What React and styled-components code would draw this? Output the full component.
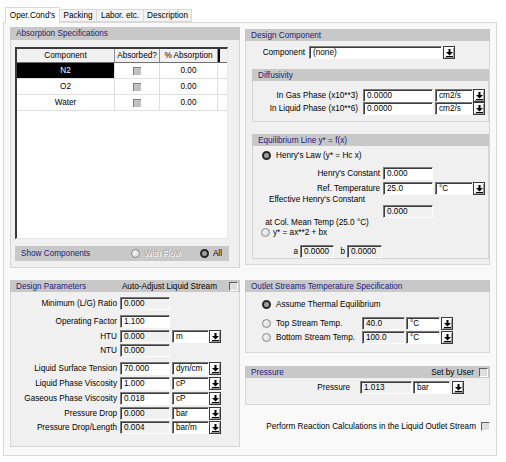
import React from 'react'
import styled, { createGlobalStyle } from 'styled-components'

const GlobalStyle = createGlobalStyle`
	body {
		margin: 0;
		background: #fff;
		font-family: "Liberation Sans", Arial, sans-serif;
		font-size: 8.2px;
		color: #000;
	}
`

const Frame = styled.div`
	width: 506px;
	height: 462px;
	padding: 7px 0 0 3px;
	box-sizing: border-box;
`

const TabBar = styled.div`
	display: flex;
	align-items: flex-end;
	height: 15px;
	padding-left: 3px;
	position: relative;
	z-index: 1;
`

const Tab = styled.div`
	width: ${p => p.$w}px;
	height: ${p => (p.$active ? 16 : 13)}px;
	box-sizing: border-box;
	display: flex;
	align-items: center;
	justify-content: center;
	margin-left: -1px;
	border: 1px solid #d9d9d9;
	border-bottom: ${p => (p.$active ? '0' : '1px solid #d9d9d9')};
	background: ${p => (p.$active ? '#fff' : '#f3f3f3')};
	margin-bottom: ${p => (p.$active ? '-1px' : '0')};
`

const Page = styled.div`
	width: 494px;
	height: 434px;
	box-sizing: border-box;
	border: 1px solid #d9d9d9;
	background: #f9f9f9;
	padding: 4px 0 0 6px;
	display: grid;
	grid-template-columns: 230px 245px;
	column-gap: 5px;
	align-items: start;
`

const Column = styled.div`
	display: flex;
	flex-direction: column;
	padding-top: ${p => p.$pt || 0}px;
`

const Group = styled.div`
	height: ${p => p.$h}px;
	box-sizing: border-box;
	background: #f0f0f0;
	border: 1px solid #d6d6d6;
	border-top: 0;
	margin-top: ${p => p.$mt || 0}px;
	margin-left: ${p => p.$ml || 0}px;
	display: flex;
	flex-direction: column;
`

const GroupHeader = styled.div`
	height: ${p => p.$h || 12}px;
	flex: none;
	margin: 0 -1px;
	background: #c8c8c8;
	color: #22227a;
	display: flex;
	align-items: center;
	justify-content: space-between;
	padding: 0 6px;
	white-space: nowrap;
`

const HeaderExtra = styled.span`
	color: #000;
	display: flex;
	align-items: center;
	gap: ${p => p.$gap || 8}px;
	margin-right: -4px;
`

const AbsBody = styled.div`
	padding: 7px 0 0 4px;
`

const GridBox = styled.div`
	width: 213px;
	height: 192px;
	box-sizing: border-box;
	background: #fff;
	border-style: solid;
	border-width: 2px 1px 1px 2px;
	border-color: #3a3a3a #e8e8e8 #e8e8e8 #3a3a3a;
`

const GridRow = styled.div`
	display: grid;
	grid-template-columns: 98px 45px 58px 2px 1fr;
	height: ${p => (p.$head ? 14 : 16)}px;
	background: ${p => (p.$head ? '#f0f0f0' : '#fff')};
	border-bottom: 1px solid ${p => (p.$head ? '#707070' : '#e0e0e0')};
	box-sizing: border-box;
`

const Cell = styled.div`
	display: flex;
	align-items: center;
	justify-content: center;
	background: ${p => (p.$sel ? '#000' : 'transparent')};
	color: ${p => (p.$sel ? '#fff' : '#000')};
	border-right: 1px solid ${p => (p.$head ? '#909090' : '#e0e0e0')};
	white-space: nowrap;
`

const HeadBar = styled.div`
	background: ${p => (p.$show ? '#000' : 'transparent')};
`

const Filler = styled.div`
	background: ${p => (p.$head ? '#f0f0f0' : '#fff')};
`

const GridCheck = styled.span`
	width: 7px;
	height: 7px;
	background: #c0c0c0;
	border-top: 1px solid #808080;
	border-left: 1px solid #808080;
`

const ShowBar = styled.div`
	margin-top: 7px;
	width: 214px;
	height: 15px;
	box-sizing: border-box;
	background: #c8c8c8;
	color: #22227a;
	display: flex;
	align-items: center;
	padding-left: 6px;
`

const ShowOptions = styled.div`
	display: flex;
	align-items: center;
	margin-left: auto;
	gap: 20px;
	padding-right: 7px;
	color: #000;
`

const RadioLabel = styled.label`
	display: flex;
	align-items: center;
	gap: ${p => p.$gap || 4}px;
	padding-left: ${p => p.$pl || 0}px;
	color: ${p => (p.$disabled ? '#a8a8a8' : '#000')};
	text-shadow: ${p => (p.$disabled ? '1px 1px 0 #fff' : 'none')};
	white-space: nowrap;
`

const Radio = styled.span`
	width: 9px;
	height: 9px;
	flex: none;
	box-sizing: border-box;
	border-radius: 50%;
	${p =>
		p.$on
			? 'border: 2.5px solid #262626; background: #a0a0a0;'
			: 'border: 1px solid #8a8a8a; background: radial-gradient(circle at 40% 40%, #f4f4f4, #d2d2d2);'}
`

const Check = styled.span`
	width: 9px;
	height: 9px;
	flex: none;
	box-sizing: border-box;
	background: #dedede;
	border-style: solid;
	border-width: 1px;
	border-color: #606060 #fff #fff #606060;
`

const Body = styled.div`
	display: flex;
	flex-direction: column;
`

const Row = styled.div`
	display: grid;
	grid-template-columns: ${p => p.$cols};
	align-items: center;
	height: ${p => p.$h || 13}px;
	margin-top: ${p => p.$mt || 0}px;
	white-space: nowrap;
`

const Label = styled.span`
	text-align: right;
	padding-right: ${p => p.$pr || 0}px;
`

const StackLabel = styled.span`
	height: 100%;
	display: flex;
	flex-direction: column;
	align-items: center;
	justify-content: space-between;
`

const Field = styled.div`
	height: 13px;
	box-sizing: border-box;
	background: ${p => (p.$ro ? '#f0f0f0' : '#fff')};
	border-style: solid;
	border-width: 1px;
	border-color: #7a7a7a #fff #fff #7a7a7a;
	box-shadow: inset 1px 1px 0 #3c3c3c;
	padding-left: 3px;
	display: flex;
	align-items: center;
	overflow: hidden;
`

const ArrowBtn = styled.div`
	width: 12px;
	height: 13px;
	box-sizing: border-box;
	background: #f8f8f8;
	border: 1px solid #3a3a3a;
	box-shadow: inset 1px 1px 0 #fff, inset -1px -1px 0 #9a9a9a;
	display: flex;
	align-items: center;
	justify-content: center;
`

const RadioRow = styled.div`
	display: flex;
	align-items: center;
	height: 13px;
	margin-top: ${p => p.$mt || 0}px;
	padding-left: ${p => p.$pl || 0}px;
`

const FooterRow = styled.div`
	display: flex;
	align-items: center;
	justify-content: flex-end;
	gap: 5px;
	margin-top: ${p => p.$mt || 0}px;
	height: 13px;
`

const DownArrow = () => (
	<svg width="7" height="8" viewBox="0 0 7 8">
		<rect x="2.5" y="0" width="2" height="3" fill="#000" />
		<path d="M0 3h7L3.5 6.5z" fill="#000" />
		<rect x="0" y="7" width="7" height="1" fill="#000" />
	</svg>
)

const Combo = ({ children }) => (
	<>
		<Field>{children}</Field>
		<ArrowBtn>
			<DownArrow />
		</ArrowBtn>
	</>
)

const components = [
	{ name: 'N2', sel: true },
	{ name: 'O2' },
	{ name: 'Water' },
]

const params = [
	{ label: 'Minimum (L/G) Ratio', value: '0.000', ro: true, mt: 5 },
	{ label: 'Operating Factor', value: '1.100', mt: 5 },
	{ label: 'HTU', value: '0.000', ro: true, unit: 'm', mt: 2 },
	{ label: 'NTU', value: '0.000', ro: true, mt: 1 },
	{ label: 'Liquid Surface Tension', value: '70.000', unit: 'dyn/cm', mt: 5 },
	{ label: 'Liquid Phase Viscosity', value: '1.000', unit: 'cP', mt: 2 },
	{ label: 'Gaseous Phase Viscosity', value: '0.018', unit: 'cP', mt: 2 },
	{ label: 'Pressure Drop', value: '0.000', ro: true, unit: 'bar', mt: 2 },
	{ label: 'Pressure Drop/Length', value: '0.004', ro: true, unit: 'bar/m', mt: 1 },
]

const paramCols = '109px 50px 2px 37px 12px'
const diffCols = '110px 70px 2px 38px 2px 12px'
const eqCols = '130px 50px 2px 38px 2px 12px'
const outletCols = '116px 43px 1px 34px 1px 12px'

export default function App() {
	return (
		<Frame>
			<GlobalStyle />
			<TabBar>
				<Tab $w={55} $active>Oper.Cond's</Tab>
				<Tab $w={38}>Packing</Tab>
				<Tab $w={48}>Labor. etc.</Tab>
				<Tab $w={49}>Description</Tab>
			</TabBar>
			<Page>
				<Column>
					<Group $h={241}>
						<GroupHeader $h={13}>Absorption Specifications</GroupHeader>
						<AbsBody>
							<GridBox>
								<GridRow $head>
									<Cell $head>Component</Cell>
									<Cell $head>Absorbed?</Cell>
									<Cell $head>% Absorption</Cell>
									<HeadBar $show />
									<Filler $head />
								</GridRow>
								{components.map(c => (
									<GridRow key={c.name}>
										<Cell $sel={c.sel}>{c.name}</Cell>
										<Cell>
											<GridCheck />
										</Cell>
										<Cell>0.00</Cell>
										<HeadBar />
										<Filler />
									</GridRow>
								))}
							</GridBox>
							<ShowBar>
								Show Components
								<ShowOptions>
									<RadioLabel $disabled>
										<Radio />
										With Flow
									</RadioLabel>
									<RadioLabel>
										<Radio $on />
										All
									</RadioLabel>
								</ShowOptions>
							</ShowBar>
						</AbsBody>
					</Group>

					<Group $h={167} $mt={12}>
						<GroupHeader>
							Design Parameters
							<HeaderExtra $gap={12}>
								Auto-Adjust Liquid Stream
								<Check />
							</HeaderExtra>
						</GroupHeader>
						<Body>
							{params.map(p => (
								<Row key={p.label} $cols={paramCols} $mt={p.mt}>
									<Label $pr={3}>{p.label}</Label>
									<Field $ro={p.ro}>{p.value}</Field>
									<span />
									{p.unit ? <Combo>{p.unit}</Combo> : null}
								</Row>
							))}
						</Body>
					</Group>
				</Column>

				<Column $pt={2}>
					<Group $h={236}>
						<GroupHeader>Design Component</GroupHeader>
						<Body>
							<Row $cols="59px 4px 133px 1px 12px" $mt={5}>
								<Label>Component</Label>
								<span />
								<Field>(none)</Field>
								<span />
								<ArrowBtn>
									<DownArrow />
								</ArrowBtn>
							</Row>

							<Group $h={53} $mt={10} $ml={6}>
								<GroupHeader>Diffusivity</GroupHeader>
								<Row $cols={diffCols} $mt={8}>
									<Label $pr={5}>In Gas Phase (x10**3)</Label>
									<Field>0.0000</Field>
									<span />
									<Combo>cm2/s</Combo>
								</Row>
								<Row $cols={diffCols}>
									<Label $pr={5}>In Liquid Phase (x10**6)</Label>
									<Field>0.0000</Field>
									<span />
									<Combo>cm2/s</Combo>
								</Row>
							</Group>

							<Group $h={125} $mt={12} $ml={6}>
								<GroupHeader>Equilibrium Line y* = f(x)</GroupHeader>
								<RadioRow $mt={3} $pl={9}>
									<RadioLabel $gap={5}>
										<Radio $on />
										Henry's Law (y* = Hc x)
									</RadioLabel>
								</RadioRow>
								<Row $cols={eqCols} $mt={6}>
									<Label $pr={3}>Henry's Constant</Label>
									<Field>0.000</Field>
								</Row>
								<Row $cols={eqCols} $mt={2}>
									<Label $pr={3}>Ref. Temperature</Label>
									<Field>25.0</Field>
									<span />
									<Combo>°C</Combo>
								</Row>
								<Row $cols="14px 100px 16px 50px" $h={33} $mt={0}>
									<span />
									<StackLabel>
										<span>Effective Henry's Constant</span>
										<span>at Col. Mean Temp (25.0 °C)</span>
									</StackLabel>
									<span />
									<Field $ro>0.000</Field>
								</Row>
								<RadioRow $mt={0} $pl={8}>
									<RadioLabel $gap={3}>
										<Radio />
										y* = ax**2 + bx
									</RadioLabel>
								</RadioRow>
								<Row $cols="47px 34px 13px 35px" $mt={6}>
									<Label $pr={2}>a</Label>
									<Field $ro>0.0000</Field>
									<Label $pr={2}>b</Label>
									<Field $ro>0.0000</Field>
								</Row>
							</Group>
						</Body>
					</Group>

					<Group $h={73} $mt={15}>
						<GroupHeader>Outlet Streams Temperature Specification</GroupHeader>
						<Body>
							<RadioRow $mt={6} $pl={16}>
								<RadioLabel $gap={5}>
									<Radio $on />
									Assume Thermal Equilibrium
								</RadioLabel>
							</RadioRow>
							<Row $cols={outletCols} $mt={6}>
								<RadioLabel $gap={5} $pl={16}>
									<Radio />
									Top Stream Temp.
								</RadioLabel>
								<Field $ro>40.0</Field>
								<span />
								<Field>°C</Field>
								<span />
								<ArrowBtn>
									<DownArrow />
								</ArrowBtn>
							</Row>
							<Row $cols={outletCols} $mt={1}>
								<RadioLabel $gap={5} $pl={16}>
									<Radio />
									Bottom Stream Temp.
								</RadioLabel>
								<Field $ro>100.0</Field>
								<span />
								<Field>°C</Field>
								<span />
								<ArrowBtn>
									<DownArrow />
								</ArrowBtn>
							</Row>
						</Body>
					</Group>

					<Group $h={39} $mt={13}>
						<GroupHeader>
							Pressure
							<HeaderExtra $gap={5}>
								Set by User
								<Check />
							</HeaderExtra>
						</GroupHeader>
						<Row $cols="104px 10px 52px 1px 37px 2px 12px" $mt={3}>
							<Label>Pressure</Label>
							<span />
							<Field $ro>1.013</Field>
							<span />
							<Field>bar</Field>
							<span />
							<ArrowBtn>
								<DownArrow />
							</ArrowBtn>
						</Row>
					</Group>

					<FooterRow $mt={15}>
						Perform Reaction Calculations in the Liquid Outlet Stream
						<Check />
					</FooterRow>
				</Column>
			</Page>
		</Frame>
	)
}
